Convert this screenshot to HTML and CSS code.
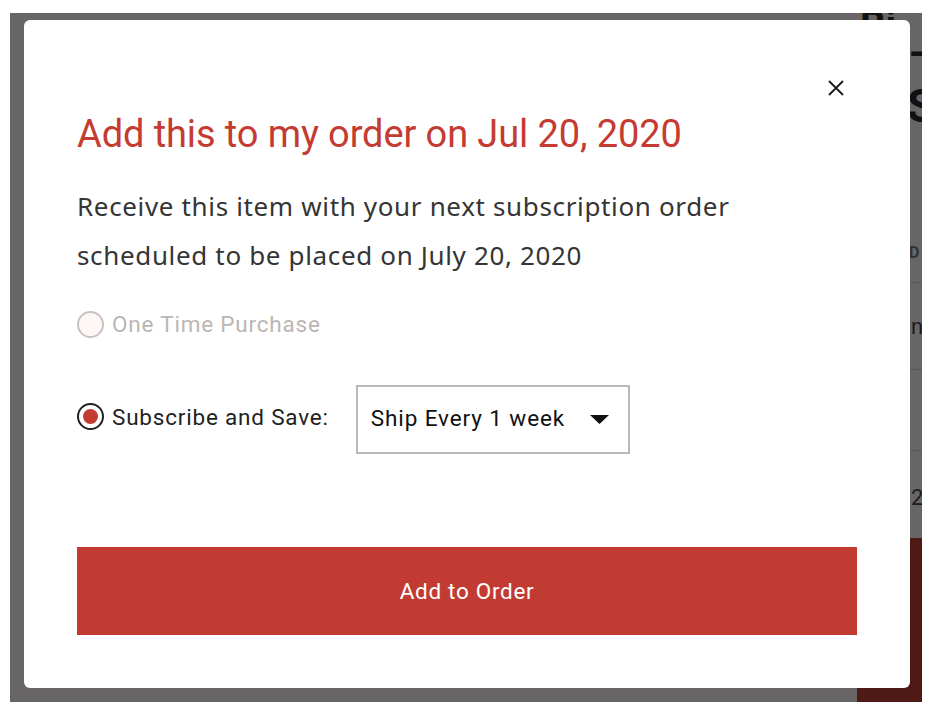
FILE: index.html
```html
<!DOCTYPE html>
<html>
<head>
<meta charset="utf-8">
<link rel="stylesheet" href="styles.css">
</head>
<body>
<div class="backdrop">
  <div class="behind">
    <div class="bh-title">Bi</div>
    <div class="bh-dash">-</div>
    <div class="bh-s">S</div>
    <div class="bh-head">D</div>
    <div class="bh-row bh-r1">n</div>
    <div class="bh-row bh-r2"></div>
    <div class="bh-row bh-r3">2</div>
    <div class="bh-block"></div>
  </div>
  <div class="modal">
    <button class="close" aria-label="Close">
      <svg width="18" height="18" viewBox="0 0 18 18"><path d="M2 2 L16 16 M16 2 L2 16" stroke="#1a1a1a" stroke-width="1.8" fill="none"/></svg>
    </button>
    <h1 class="title">Add this to my order on Jul 20, 2020</h1>
    <p class="desc">Receive this item with your next subscription order scheduled to be placed on July 20, 2020</p>
    <div class="option disabled">
      <span class="radio"></span>
      <span class="label">One Time Purchase</span>
    </div>
    <div class="option checked">
      <span class="radio"><span class="dot"></span></span>
      <span class="label">Subscribe and Save:</span>
      <div class="select">
        <span>Ship Every 1 week</span>
        <svg width="19" height="9" viewBox="0 0 19 9"><path d="M0 0 H19 L9.5 9 Z" fill="#111"/></svg>
      </div>
    </div>
    <button class="submit">Add to Order</button>
  </div>
</div>
</body>
</html>
```
FILE: styles.css
```css
* { box-sizing: border-box; }
html, body { margin: 0; padding: 0; background: #fff; }
body { width: 934px; height: 714px; overflow: hidden; font-family: Roboto, "Liberation Sans", sans-serif; }

.backdrop {
  position: relative;
  overflow: hidden;
  margin: 13px 0 0 10px;
  width: 912px;
  height: 689px;
  background: #676565;
  padding: 7px 0 0 14px;
}

.behind { position: absolute; left: 847px; top: 0; width: 65px; height: 689px; color: #111; }
.bh-title { position: absolute; left: 3px; top: -7px; font: 700 40px/1 Roboto, sans-serif; }
.bh-dash { position: absolute; left: 52px; top: 20px; font: 700 40px/1 Roboto, sans-serif; }
.bh-s { position: absolute; left: 50px; top: 70px; font: 700 46px/1 Roboto, sans-serif; }
.bh-head { position: absolute; left: 52px; top: 232px; font: 700 16px/1 Roboto, sans-serif; color: #333; }
.bh-row { position: absolute; left: 0; width: 65px; border-top: 1px solid #575555; font: 400 22px/1 Roboto, sans-serif; color: #1c1c1c; padding-left: 54px; }
.bh-r1 { top: 269px; height: 87px; padding-top: 33px; }
.bh-r2 { top: 356px; height: 81px; }
.bh-r3 { top: 437px; height: 88px; padding-top: 36px; }
.bh-block { position: absolute; left: 0; top: 525px; width: 65px; height: 164px; background: #4f1915; }

.modal {
  position: relative;
  width: 886px;
  height: 668px;
  background: #fff;
  border-radius: 6px;
  padding: 92px 53px 0 53px;
}

.close {
  position: absolute;
  top: 58px;
  left: 802px;
  width: 20px;
  height: 20px;
  padding: 0;
  border: 0;
  background: none;
  display: flex;
  align-items: center;
  justify-content: center;
}

.title {
  margin: 0;
  font-family: Roboto, sans-serif;
  font-weight: 400;
  font-size: 38px;
  line-height: 44px;
  color: #c43b32;
  letter-spacing: -0.1px;
}

.desc {
  margin: 26px 0 0;
  width: 745px;
  font-family: "Noto Sans", Lato, sans-serif;
  font-size: 26px;
  line-height: 49px;
  letter-spacing: 0.65px;
  color: #353535;
}

.option { display: flex; align-items: center; }
.option.disabled { margin-top: 29px; height: 30px; color: #bbb6b3; }
.option.checked { margin-top: 46px; height: 69px; color: #222; }

.radio {
  width: 27px;
  height: 27px;
  border-radius: 50%;
  border: 2px solid #222;
  display: flex;
  align-items: center;
  justify-content: center;
  flex: none;
}
.checked .radio, .checked .label { margin-bottom: 6px; }
.disabled .radio { border-color: #c9c3c0; background: #fdf8f5; }
.dot { width: 15px; height: 15px; border-radius: 50%; background: #c43b32; }

.label { margin-left: 8px; font-size: 22.5px; letter-spacing: 0.8px; }

.select {
  margin-left: 27px;
  width: 274px;
  height: 69px;
  border: 2px solid #bdb8b5;
  display: flex;
  align-items: center;
  justify-content: space-between;
  padding: 0 19px 3px 13px;
  font-size: 22.5px;
  letter-spacing: 0.9px;
  color: #111;
}
.select svg { margin-top: 2px; }

.submit {
  display: block;
  margin-top: 93px;
  width: 780px;
  height: 88px;
  border: 0;
  background: #c23b32;
  color: #fff;
  font-family: Roboto, sans-serif;
  font-size: 22.5px;
  letter-spacing: 0.7px;
}
```
